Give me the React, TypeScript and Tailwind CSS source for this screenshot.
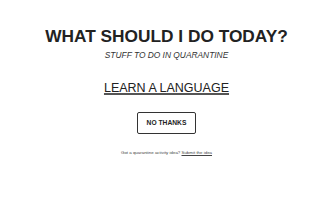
export default function App() {
  return (
    <div className="min-h-screen w-full bg-white font-['Liberation_Sans',Arial,sans-serif] text-[#222]">
      <div className="flex flex-col items-center pt-[28px]">
        {/* Header */}
        <h1 className="text-[17.3px] font-bold leading-none text-[#222]">WHAT SHOULD I DO TODAY?</h1>
        <p className="mt-[6px] text-[8.4px] italic leading-none text-[#333]">STUFF TO DO IN QUARANTINE</p>

        {/* Suggestion */}
        <a
          href="#"
          className="mt-[22px] text-[12.5px] leading-none text-[#222] underline decoration-[#555] decoration-[2px] underline-offset-[1px]"
        >
          LEARN A LANGUAGE
        </a>

        <button className="mt-[18px] h-[22px] w-[59px] rounded-[2px] border-[1.5px] border-[#333] bg-white text-[6.7px] font-bold leading-none text-[#222]">
          NO THANKS
        </button>

        {/* Footer */}
        <p className="mt-[17px] text-[4.4px] leading-none text-[#444]">
          Got a quarantine activity idea? <a href="#" className="underline">Submit the idea</a>
        </p>
      </div>
    </div>
  );
}
